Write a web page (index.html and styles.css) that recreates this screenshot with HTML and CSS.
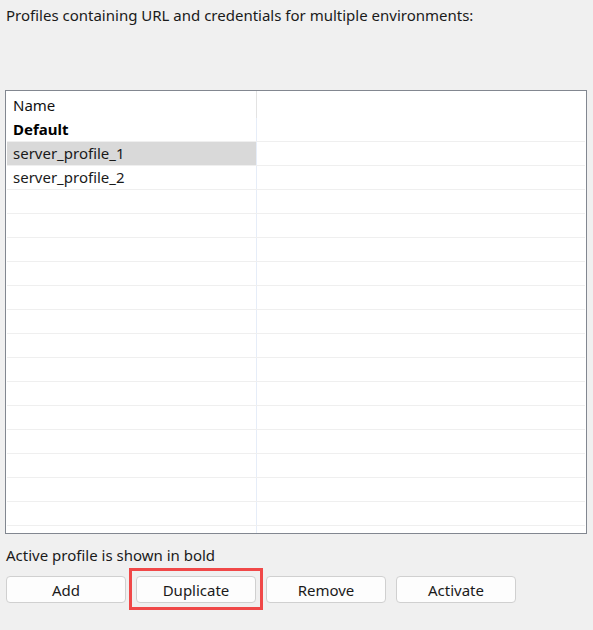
FILE: index.html
```html
<!DOCTYPE html>
<html lang="en">
<head>
    <meta charset="UTF-8">
    <meta name="viewport" content="width=device-width, initial-scale=1.0">
    <title>Server Profiles</title>
    <link rel="stylesheet" href="styles.css">
</head>
<body>

<div class="page">
    <p class="intro">Profiles containing URL and credentials for multiple environments:</p>

    <!-- Profile list -->
    <div class="list">
        <div class="list-head">
            <div class="cell name-col">Name</div>
            <div class="cell"></div>
        </div>
        <div class="row active"><div class="cell name-col">Default</div><div class="cell"></div></div>
        <div class="row selected"><div class="cell name-col">server_profile_1</div><div class="cell"></div></div>
        <div class="row"><div class="cell name-col">server_profile_2</div><div class="cell"></div></div>
        <div class="row"><div class="cell name-col"></div><div class="cell"></div></div>
        <div class="row"><div class="cell name-col"></div><div class="cell"></div></div>
        <div class="row"><div class="cell name-col"></div><div class="cell"></div></div>
        <div class="row"><div class="cell name-col"></div><div class="cell"></div></div>
        <div class="row"><div class="cell name-col"></div><div class="cell"></div></div>
        <div class="row"><div class="cell name-col"></div><div class="cell"></div></div>
        <div class="row"><div class="cell name-col"></div><div class="cell"></div></div>
        <div class="row"><div class="cell name-col"></div><div class="cell"></div></div>
        <div class="row"><div class="cell name-col"></div><div class="cell"></div></div>
        <div class="row"><div class="cell name-col"></div><div class="cell"></div></div>
        <div class="row"><div class="cell name-col"></div><div class="cell"></div></div>
        <div class="row"><div class="cell name-col"></div><div class="cell"></div></div>
        <div class="row"><div class="cell name-col"></div><div class="cell"></div></div>
        <div class="row"><div class="cell name-col"></div><div class="cell"></div></div>
        <div class="row"><div class="cell name-col"></div><div class="cell"></div></div>
    </div>

    <p class="note">Active profile is shown in bold</p>

    <div class="buttons">
        <button type="button">Add</button>
        <div class="marked"><button type="button">Duplicate</button></div>
        <button type="button">Remove</button>
        <button type="button">Activate</button>
    </div>
</div>

</body>
</html>
```

FILE: styles.css
```css
body {
    margin: 0;
    background-color: #f0f0f0;
    font-family: "Noto Sans", "Open Sans", sans-serif;
    font-size: 15px;
    color: #1a1a1a;
}
.page {
    padding: 5px 0 26px 6px;
}
p {
    margin: 0;
    line-height: 20px;
}
.list {
    margin: 65px 0 0 -1px;
    width: 578px;
    height: 442px;
    border: 1px solid #828790;
    background-color: white;
    padding: 0 1px;
    overflow: hidden;
}
.list-head, .row {
    display: grid;
    grid-template-columns: 250px 1fr;
}
.list-head {
    height: 27px;
}
.list-head .cell {
    line-height: 27px;
    padding-top: 1px;
}
.list-head .name-col {
    border-right: 1px solid #e3e3e3;
    color: #111;
}
.row {
    height: 23px;
    border-bottom: 1px solid #efefef;
}
.row .cell {
    line-height: 23px;
}
.row .name-col {
    border-right: 1px solid #e6edf8;
}
.cell {
    padding-left: 6px;
    white-space: nowrap;
}
.row.active .name-col {
    font-weight: bold;
    color: #000;
}
.row.selected .name-col {
    background-color: #d9d9d9;
}
.note {
    margin-top: 11px;
}
.buttons {
    display: flex;
    align-items: flex-start;
    gap: 10px;
    margin-top: 11px;
}
button {
    display: block;
    width: 120px;
    height: 27px;
    padding: 0;
    font-family: inherit;
    font-size: 15px;
    color: #1a1a1a;
    background-color: #fdfdfd;
    border: 1px solid #d0d0d0;
    border-radius: 4px;
}
/* red frame drawn around the Duplicate button */
.marked {
    margin: -8px -7px -7px;
    padding: 5px 4px 4px;
    border: 3px solid #f04848;
}
```
